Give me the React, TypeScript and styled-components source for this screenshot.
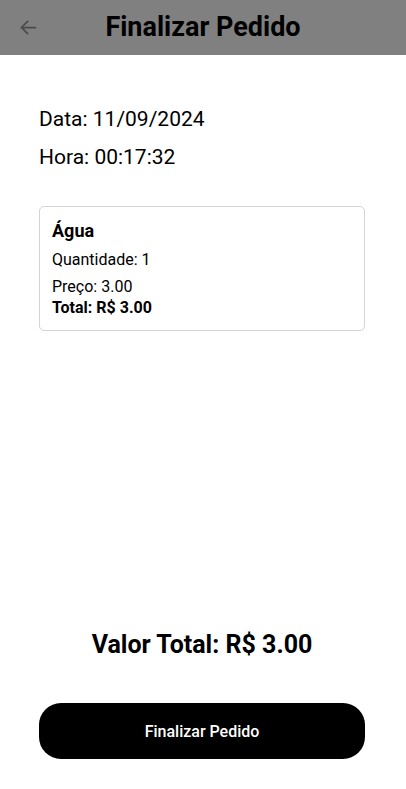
import React from "react";
import styled, { createGlobalStyle } from "styled-components";

const Global = createGlobalStyle`
  html, body { margin: 0; padding: 0; background: #fff; }
  body { font-family: Roboto, "Noto Sans", sans-serif; color: #000; }
  * { box-sizing: border-box; }
`;

const Screen = styled.div`
  width: 406px;
  height: 789px;
  display: flex;
  flex-direction: column;
  background: #fff;
`;

const Header = styled.header`
  height: 55px;
  background: #808080;
  display: grid;
  grid-template-columns: 55px 1fr 55px;
  align-items: center;
`;

const BackButton = styled.button`
  background: none;
  border: none;
  padding: 0 0 0 1px;
  width: 55px;
  height: 55px;
  display: flex;
  align-items: center;
  justify-content: center;
  color: #4a4a4a;
`;

const Title = styled.h1`
  margin: 0 0 1px 0;
  text-align: center;
  font-size: 27px;
  font-weight: 700;
  color: #000;
`;

const Content = styled.main`
  flex: 1;
  display: flex;
  flex-direction: column;
  padding: 52px 41px 30px 39px;
`;

const InfoLine = styled.p`
  margin: 0 0 14px 0;
  font-size: 21px;
  font-weight: 400;
  line-height: 24px;
`;

const Card = styled.section`
  margin-top: 23px;
  border: 1px solid #d4d4d4;
  border-radius: 5px;
  padding: 12px 12px 12px 12px;
  display: flex;
  flex-direction: column;
`;

const ItemName = styled.h2`
  margin: 0 0 7px 0;
  font-size: 18px;
  font-weight: 700;
  line-height: 24px;
`;

const ItemLine = styled.p<{ $bold?: boolean; $gap?: number }>`
  margin: 0 0 ${(p) => p.$gap ?? 0}px 0;
  font-size: 16px;
  line-height: 20px;
  font-weight: ${(p) => (p.$bold ? 700 : 400)};
`;

const Spacer = styled.div`
  flex: 1;
`;

const Total = styled.h2`
  margin: 0 0 44px 0;
  text-align: center;
  font-size: 25px;
  font-weight: 700;
`;

const SubmitButton = styled.button`
  width: 100%;
  height: 56px;
  border: none;
  border-radius: 22px;
  background: #000;
  color: #fff;
  font-family: Roboto, sans-serif;
  font-size: 16px;
  font-weight: 500;
`;

const ArrowIcon = () => (
  <svg width="21" height="21" viewBox="0 0 24 24" fill="none" stroke="currentColor" strokeWidth="2" strokeLinecap="round" strokeLinejoin="round">
    <path d="M20 12H4" />
    <path d="M11 5l-7 7 7 7" />
  </svg>
);

export default function App() {
  return (
    <>
      <Global />
      <Screen>
        <Header>
          <BackButton aria-label="Voltar">
            <ArrowIcon />
          </BackButton>
          <Title>Finalizar Pedido</Title>
          <div />
        </Header>
        <Content>
          <InfoLine>Data: 11/09/2024</InfoLine>
          <InfoLine>Hora: 00:17:32</InfoLine>
          <Card>
            <ItemName>Água</ItemName>
            <ItemLine $gap={7}>Quantidade: 1</ItemLine>
            <ItemLine $gap={1}>Preço: 3.00</ItemLine>
            <ItemLine $bold>Total: R$ 3.00</ItemLine>
          </Card>
          <Spacer />
          <Total>Valor Total: R$ 3.00</Total>
          <SubmitButton>Finalizar Pedido</SubmitButton>
        </Content>
      </Screen>
    </>
  );
}
